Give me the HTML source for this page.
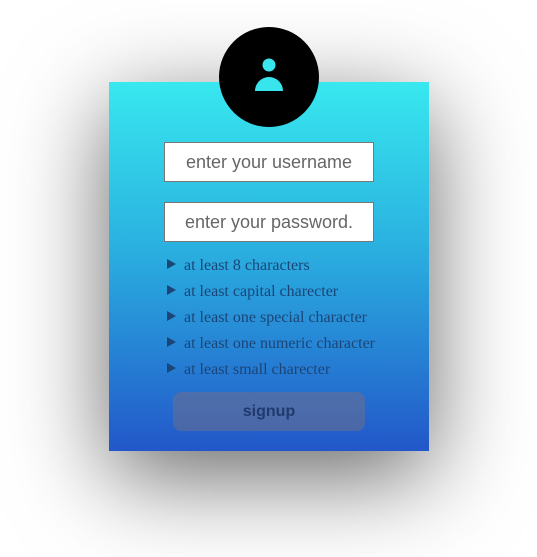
<!DOCTYPE html>
<html><head><meta charset="utf-8"><style>
html,body{margin:0;padding:0;width:537px;height:557px;background:#fff;overflow:hidden;}
.card{position:absolute;left:109px;top:82px;width:320px;height:369px;
background:linear-gradient(to bottom,#38e8ef 0%,#2ab0e0 45%,#2257c9 100%);
box-shadow:0 25px 90px rgba(0,0,0,0.6);}
.avatar{position:absolute;left:219px;top:27px;width:100px;height:100px;border-radius:50%;background:#000;}
.inp{position:absolute;left:164px;width:208px;height:38px;background:#fff;border:1px solid #777;
font:18px "Liberation Sans",sans-serif;color:#666;text-align:center;line-height:38px;}
.li{position:absolute;left:167px;font:16px/18px "Liberation Serif",serif;color:#1b4577;white-space:nowrap;}
.li span.t{display:inline-block;width:0;height:0;border-top:5px solid transparent;border-bottom:5px solid transparent;border-left:9px solid #1b4577;margin-right:8px;vertical-align:1px;}
.btn{position:absolute;left:173px;top:392px;width:192px;height:39px;border-radius:8px;background:rgba(110,110,140,0.55);
font:bold 16px "Liberation Sans",sans-serif;color:#1f3a6d;text-align:center;line-height:39px;}
</style></head><body>
<div class="card"></div>
<div class="avatar"><svg width="100" height="100" viewBox="0 0 100 100">
<circle cx="50" cy="38" r="6.5" fill="#38e5ec"/>
<path d="M36 64 A14 14 0 0 1 64 64 Z" fill="#38e5ec"/></svg></div>
<div class="inp" style="top:142px">enter your username</div>
<div class="inp" style="top:202px">enter your password.</div>
<div class="li" style="top:257px"><span class="t"></span>at least 8 characters</div>
<div class="li" style="top:283px"><span class="t"></span>at least capital charecter</div>
<div class="li" style="top:309px"><span class="t"></span>at least one special character</div>
<div class="li" style="top:335px"><span class="t"></span>at least one numeric character</div>
<div class="li" style="top:361px"><span class="t"></span>at least small charecter</div>
<div class="btn">signup</div>
</body></html>
